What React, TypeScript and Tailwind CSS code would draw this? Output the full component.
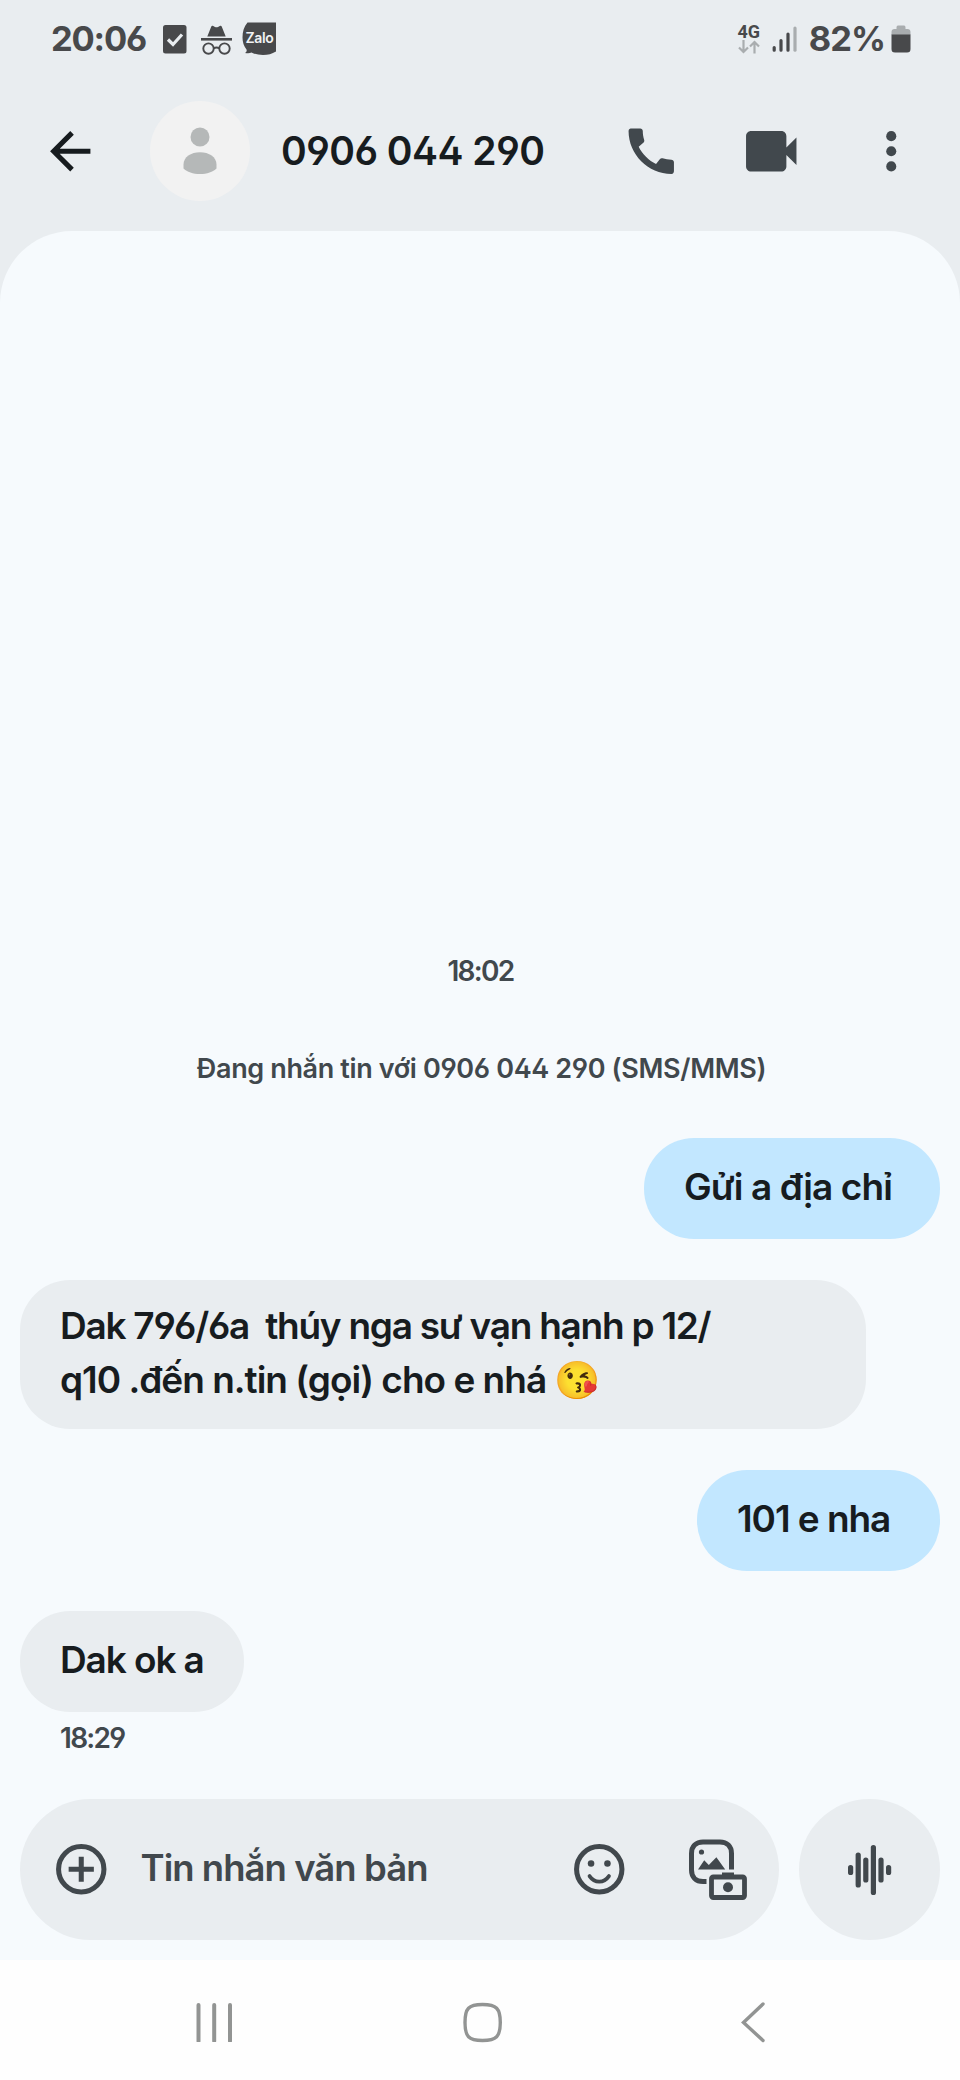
import React from "react";

function StatusBar() {
  return (
    <div className="flex h-[78px] items-center pl-[51px] pr-[49px] text-[#48494b]">
      <span className="w-[112px] text-[34.5px] font-bold leading-[40px] tracking-[-1.2px]">20:06</span>
      <svg className="h-[30px] w-6" viewBox="0 0 24 30">
        <rect x="0" y="1" width="23.5" height="28.5" rx="2.5" fill="#48494b" />
        <path d="M5 15.5l5 5L19 10.5" fill="none" stroke="#e9edf0" strokeWidth="3.2" />
      </svg>
      <svg className="ml-[14px] mt-[2px] h-[32px] w-[31px]" viewBox="0 0 31 32" fill="none" stroke="#48494b">
        <path d="M6.3 12.5L10.3 2.6c.3-.8 1-1 1.9-.6l1.8.9c1 .4 2 .4 3 0l1.8-.9c.9-.4 1.6-.2 1.9.6l4 9.9z" fill="#48494b" stroke="none" />
        <path d="M0 15.3h31" strokeWidth="2.6" />
        <circle cx="7.5" cy="24.6" r="5.2" strokeWidth="1.9" />
        <circle cx="23.5" cy="24.6" r="5.2" strokeWidth="1.9" />
        <path d="M12.7 24.3c1.8-1.1 3.8-1.1 5.6 0" strokeWidth="2" />
      </svg>
      <div className="relative ml-[10px] mb-[2px] flex h-[33px] w-[34px] items-center justify-center">
        <svg className="absolute inset-0 h-[33px] w-[34px]" viewBox="0 0 34 33" fill="#48494b">
          <path d="M5.5 .5H34V29.5C30 32 26 33 21 33c-4.5 0-8.5-.9-11.5-2.5-1.8 1-4 1-6.5 .4 1.5-1 2-2.2 1.5-3.4C1.8 24 .5 20 .5 15.5 .5 9.5 2 4.5 5.5 .5z" />
        </svg>
        <span className="relative pl-[1px] text-[14px] font-semibold leading-[16px] tracking-[-0.3px] text-[#f1f3f5]">Zalo</span>
      </div>
      <div className="ml-auto flex items-center">
        <div className="flex w-[22px] flex-col items-center">
          <span className="font-[Roboto] text-[18px] font-bold leading-[16px]">4G</span>
          <svg className="h-[14px] w-[22px]" viewBox="0 0 22 14" fill="none" stroke="#a9adaf" strokeWidth="2.2">
            <path d="M5.5 0v12M1 7.5l4.5 4.5L10 7.5M16.5 13.5V2M12 6.5L16.5 2 21 6.5" />
          </svg>
        </div>
        <svg className="ml-[12px] h-[26px] w-[25px]" viewBox="0 0 25 26" strokeWidth="3.2" strokeLinecap="round">
          <path d="M2.2 21.5v2.7M9 14.5v9.7M16 8v16.2" stroke="#48494b" />
          <path d="M23 2v22.2" stroke="#a9adaf" />
        </svg>
        <span className="ml-[12px] text-[34.5px] font-bold leading-[40px] tracking-[-1px]">82%</span>
        <svg className="ml-[6px] h-[28px] w-5" viewBox="0 0 20 28">
          <path d="M5.5 2.5c0-1.4.8-2 2-2h5c1.2 0 2 .6 2 2v1.5h2c1.9 0 3 1 3 3V10H.5V7c0-2 1.1-3 3-3h2z" fill="#a9adaf" />
          <path d="M.5 9.5h19V24c0 2.5-1 3.5-3.5 3.5H4c-2.5 0-3.5-1-3.5-3.5z" fill="#48494b" />
        </svg>
      </div>
    </div>
  );
}

function Toolbar() {
  return (
    <div className="mt-[20px] flex h-[106px] items-center pl-[40px]">
      <svg className="h-[60.5px] w-[60.5px]" viewBox="0 0 24 24" fill="#171c1f">
        <path d="M20 11H7.83l5.59-5.59L12 4l-8 8 8 8 1.41-1.41L7.83 13H20v-2z" />
      </svg>
      <div className="ml-[49.5px] flex h-[100px] w-[100px] items-center justify-center rounded-full bg-[#f2f2f2]">
        <svg className="h-[48px] w-[34px]" viewBox="0 0 34 48" fill="#b5b8b8">
          <circle cx="17" cy="10" r="9.5" />
          <path d="M.5 37.5C.5 30 8 25.2 17 25.2S33.5 30 33.5 37.5v4C30 45 24 47 17 47S4 45 .5 41.5z" />
        </svg>
      </div>
      <h1 className="ml-[31px] w-[340px] whitespace-nowrap pb-[1px] text-[39px] font-semibold leading-[48px] tracking-[-0.5px] text-[#171c1f]">0906 044 290</h1>
      <svg className="h-[60.5px] w-[60.5px]" viewBox="0 0 24 24" fill="#41484d">
        <path d="M20.01 15.38c-1.23 0-2.42-.2-3.53-.56a.977.977 0 0 0-1.01.24l-1.57 1.97c-2.83-1.35-5.48-3.9-6.89-6.83l1.95-1.66c.27-.28.35-.67.24-1.02-.37-1.11-.56-2.3-.56-3.53 0-.54-.45-.99-.99-.99H4.19C3.65 3 3 3.24 3 3.99 3 13.28 10.73 21 20.01 21c.71 0 .99-.63.99-1.18v-3.45c0-.54-.45-.99-.99-.99z" />
      </svg>
      <svg className="ml-[59.5px] h-[60.5px] w-[60.5px]" viewBox="0 0 24 24" fill="#41484d">
        <path d="M18 10.48V6c0-1.1-.9-2-2-2H4c-1.1 0-2 .9-2 2v12c0 1.1.9 2 2 2h12c1.1 0 2-.9 2-2v-4.48l4 3.98v-11l-4 3.98z" />
      </svg>
      <svg className="ml-[59.5px] h-[60.5px] w-[60.5px]" viewBox="0 0 24 24" fill="#41484d">
        <circle cx="12" cy="6" r="2" />
        <circle cx="12" cy="12" r="2" />
        <circle cx="12" cy="18" r="2" />
      </svg>
    </div>
  );
}

function Conversation() {
  return (
    <div className="flex flex-col px-5 text-[37px] font-semibold leading-[54px] text-[#171c1f]">
      <time className="mt-[720px] self-center pl-[1px] text-[28px] leading-[40px] tracking-[-1.7px] text-[#41484d]">18:02</time>
      <p className="mt-[58px] self-center whitespace-nowrap pl-[3px] text-[27px] leading-[40px] tracking-[-0.36px] text-[#41484d]">
        Đang nhắn tin với 0906 044 290 (SMS/MMS)
      </p>
      <div className="mt-[49px] h-[101px] w-[296px] self-end whitespace-nowrap rounded-[50px] bg-[#c2e7ff] pl-[40px] pt-[22px] tracking-[-0.9px]">
        Gửi a địa chỉ
      </div>
      <div className="mt-[41px] h-[149px] w-[846px] rounded-[50px] bg-[#e9edf0] pl-[40px] pt-[19px]">
        <div className="whitespace-pre tracking-[-1.25px]">{"Dak 796/6a  thúy nga sư vạn hạnh p 12/"}</div>
        <div className="whitespace-pre tracking-[-1px]">{"q10 .đến n.tin (gọi) cho e nhá 😘"}</div>
      </div>
      <div className="mt-[41px] h-[101px] w-[243px] self-end whitespace-nowrap rounded-[50px] bg-[#c2e7ff] pl-[40px] pt-[22px] tracking-[-1.05px]">
        101 e nha
      </div>
      <div className="mt-[40px] h-[101px] w-[224px] whitespace-nowrap rounded-[50px] bg-[#e9edf0] pl-[40px] pt-[22px] tracking-[-1.1px]">
        Dak ok a
      </div>
      <time className="ml-[40px] mt-[6px] text-[28px] leading-[40px] tracking-[-1.7px] text-[#41484d]">18:29</time>
    </div>
  );
}

function Composer() {
  return (
    <div className="mt-[41px] flex h-[161px] gap-5 px-5 pb-5">
      <div className="flex h-[141px] w-[759px] items-center rounded-full bg-[#e9edf0] pl-[31px]">
        <svg className="h-[60.5px] w-[60.5px]" viewBox="0 0 24 24" fill="none" stroke="#41484d" strokeWidth="2">
          <circle cx="12" cy="12" r="9" />
          <path d="M12 7v10M7 12h10" />
        </svg>
        <span className="mb-[4px] ml-[29px] w-[428px] whitespace-nowrap text-[36.5px] font-semibold leading-[54px] tracking-[-0.96px] text-[#41484d]">Tin nhắn văn bản</span>
        <svg className="h-[60.5px] w-[60.5px]" viewBox="0 0 24 24" fill="none" stroke="#41484d" strokeWidth="2">
          <circle cx="12" cy="12" r="9" />
          <circle cx="8.75" cy="9.75" r="1.3" fill="#41484d" stroke="none" />
          <circle cx="15.25" cy="9.75" r="1.3" fill="#41484d" stroke="none" />
          <path d="M8.15 14.7c2 2.9 5.7 2.9 7.7 0" strokeWidth="1.5" strokeLinecap="round" />
        </svg>
        <svg className="mb-[2px] ml-[59px] h-[62px] w-[60px]" viewBox="0 0 60 62" fill="none" stroke="#41484d" strokeWidth="5">
          <path d="M43.5 31.5V15.5c0-7-4.5-11.5-11.5-11.5H15C8 4 3.5 8.5 3.5 15.5V32c0 7 4.5 11.5 11.5 11.5h3.5" />
          <circle cx="13.5" cy="14" r="2.6" fill="#41484d" stroke="none" />
          <path d="M10 31.5l6.2-9.2 4.6 4.6 7.6-7.6 8.8 12.2z" fill="#41484d" stroke="none" />
          <path d="M34 34.5h12v4H34z" fill="#41484d" stroke="none" />
          <rect x="23.5" y="39" width="33" height="20.5" rx="1.8" strokeWidth="4.8" />
          <circle cx="40" cy="49.2" r="5" fill="#41484d" stroke="none" />
        </svg>
      </div>
      <div className="flex h-[141px] w-[141px] items-center justify-center rounded-full bg-[#e9edf0]">
        <svg className="h-[50px] w-[44px]" viewBox="0 0 44 50" fill="#41484d">
          <rect x="0" y="20" width="5.2" height="10" rx="2.6" />
          <rect x="7.6" y="7.5" width="5.2" height="35" rx="2.6" />
          <rect x="15.2" y="12.5" width="5.2" height="25" rx="2.6" />
          <rect x="22.8" y="0" width="5.2" height="50" rx="2.6" />
          <rect x="30.4" y="12.5" width="5.2" height="25" rx="2.6" />
          <rect x="38" y="20" width="5.2" height="10" rx="2.6" />
        </svg>
      </div>
    </div>
  );
}

function NavBar() {
  return (
    <nav className="flex h-[120px] items-start bg-[#fefefe] pt-[42px]">
      <svg className="ml-[194px] h-10 w-10" viewBox="0 0 40 40" stroke="#929493" strokeWidth="4" strokeLinecap="round">
        <path d="M4.5 3v36M20.2 3v36M36 3v36" />
      </svg>
      <svg className="ml-[228px] h-[42px] w-[42px]" viewBox="0 0 42 42" fill="none" stroke="#929493" strokeWidth="3.4">
        <path d="M20.5 2.5C34.5 2.5 38.3 6.5 38.3 20.5S34.5 38.5 20.5 38.5 3 34.5 3 20.5 6.5 2.5 20.5 2.5z" />
      </svg>
      <svg className="ml-[235px] h-[42px] w-[30px]" viewBox="0 0 30 42" fill="none" stroke="#929493" strokeWidth="3.4" strokeLinecap="round">
        <path d="M24 2L4.5 20.5 24 38.5" />
      </svg>
    </nav>
  );
}

export default function App() {
  return (
    <div className="flex h-[2080px] w-[960px] flex-col overflow-hidden bg-[#e9edf0] font-[Inter,'Noto_Color_Emoji',sans-serif] [font-feature-settings:'cv03','cv04','ss01']">
      <header className="h-[231px] shrink-0">
        <StatusBar />
        <Toolbar />
      </header>
      <main className="h-[1729px] shrink-0 rounded-t-[72px] bg-[#f6fafd]">
        <Conversation />
        <Composer />
      </main>
      <NavBar />
    </div>
  );
}
